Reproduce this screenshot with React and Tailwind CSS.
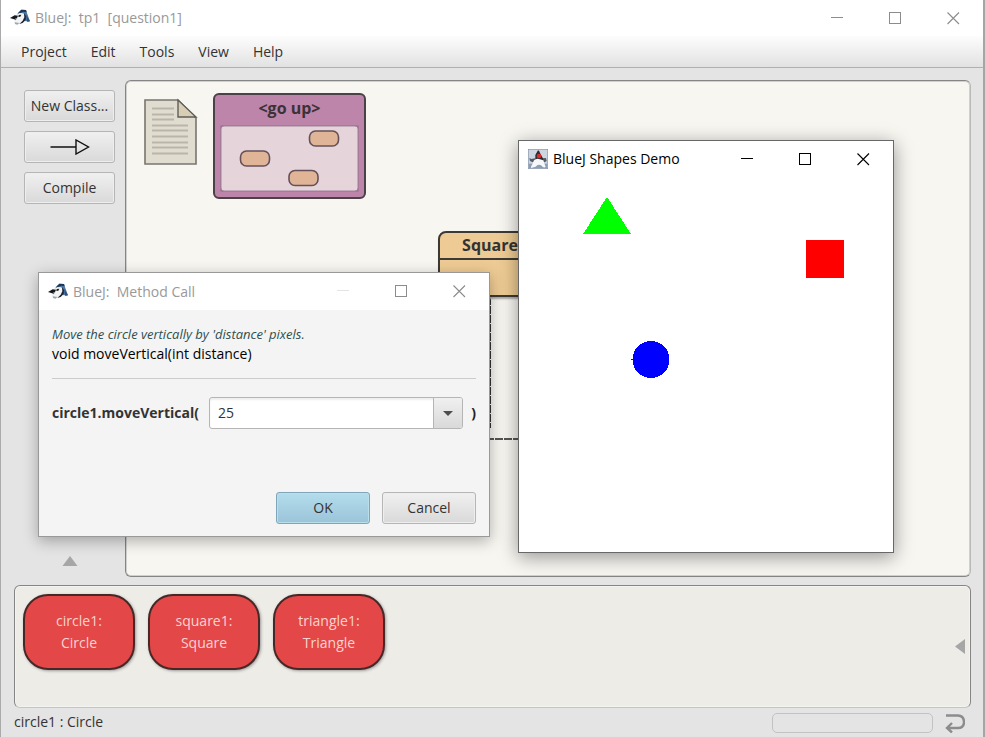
import React from "react";

const MENUS = ["Project", "Edit", "Tools", "View", "Help"];
const OBJECTS = [
  { name: "circle1", type: "Circle" },
  { name: "square1", type: "Square" },
  { name: "triangle1", type: "Triangle" },
];

function JayIcon() {
  return (
    <svg className="h-5 w-5 shrink-0" viewBox="0 0 60 60" aria-hidden="true">
      <path d="M24 14 L34 5 L48 6 L52 18 L60 40 L46 40 L40 20 Z" fill="#4d79a6" />
      <path d="M34 5 L48 6 L50 13 L40 11 L28 16 L20 20 Z" fill="#23364b" />
      <path d="M48 20 L60 40 L52 42 Z" fill="#2f5070" />
      <path d="M20 22 Q30 12 42 17 L46 28 L38 42 L24 50 L14 46 L12 38 Z" fill="#f2f4f5" />
      <path d="M0 30 L14 22 L24 23 L21 30 L12 34 Z" fill="#15191e" />
      <path d="M12 34 L22 31 L16 37 Z" fill="#555c63" />
      <path d="M26 21 L34 20 L31 26 L25 27 Z" fill="#15191e" />
      <path d="M42 15 L48 24 L47 36 L38 45 L28 48 L38 38 L43 28 Z" fill="#1b2633" />
      <path d="M14 43 L28 45 L22 50 L15 48 Z" fill="#9aa6ae" />
    </svg>
  );
}

function DukeIcon() {
  return (
    <svg className="h-5 w-5 shrink-0" viewBox="0 0 60 60" aria-hidden="true">
      <rect x="1" y="1" width="58" height="58" fill="#ccd5e0" stroke="#8494aa" strokeWidth="2" />
      <rect x="2" y="44" width="56" height="14" fill="#8e9db4" />
      <path d="M4 27 L10 30 L22 28 L23 38 L14 40 L6 36 Z" fill="#545b65" />
      <path d="M42 28 L54 27 L56 36 L50 40 L42 38 Z" fill="#545b65" />
      <path d="M30 4 Q34 5 36 12 L46 30 L44 36 L22 36 L22 18 Z" fill="#2b2c31" />
      <path d="M18 34 Q26 26 36 31 L46 34 L53 54 Q46 58 41 50 Q30 44 23 53 L9 57 Q8 52 12 47 Z" fill="#f5f7f8" />
      <circle cx="33" cy="21" r="7" fill="#d92c2c" />
    </svg>
  );
}

function WindowControls({ stroke, minStroke }) {
  return (
    <div className="flex gap-[45px] pr-[23px]">
      <button type="button" aria-label="Minimize" className="h-[13px] w-[13px]">
        <svg viewBox="0 0 13 13" className="block h-[13px] w-[13px]" shapeRendering="crispEdges">
          <path d="M0 5.5H12" stroke={minStroke || stroke} />
        </svg>
      </button>
      <button type="button" aria-label="Maximize" className="h-[13px] w-[13px]">
        <svg viewBox="0 0 13 13" className="block h-[13px] w-[13px]" shapeRendering="crispEdges">
          <rect x="0.5" y="0.5" width="11" height="11" fill="none" stroke={stroke} />
        </svg>
      </button>
      <button type="button" aria-label="Close" className="h-[13px] w-[13px]">
        <svg viewBox="0 0 13 13" className="block h-[13px] w-[13px]">
          <path d="M0.5 0.5L12 12M12 0.5L0.5 12" fill="none" stroke={stroke} strokeWidth="1.1" />
        </svg>
      </button>
    </div>
  );
}

function FxButton({ children, primary, className, ...rest }) {
  const tone = primary
    ? "border-[#7fa5b8] bg-linear-to-b from-[#b3dcec] to-[#9bc4d9] shadow-[inset_0_0_0_1px_#b9dfea]"
    : "border-[#b5b5b5] bg-linear-to-b from-[#f0f0f0] to-[#d9d9d9] shadow-[inset_0_0_0_1px_#eeeeee]";
  return (
    <button
      type="button"
      className={`flex h-8 items-center justify-center rounded-[3px] border text-[#333] ${tone} ${className || ""}`}
      {...rest}
    >
      {children}
    </button>
  );
}

function NoteIcon() {
  const lines = [9, 15, 20, 26, 31, 37, 43, 48, 54];
  return (
    <svg className="absolute left-[17px] top-[17px] h-[68px] w-[56px]" viewBox="0 0 56 68">
      <path d="M2 2H35L53 20V66H2Z" fill="#e0dccf" stroke="#77756f" strokeWidth="1.6" />
      <path d="M35 2V19H53Z" fill="#d8ceb5" stroke="#5f5d57" strokeWidth="1.4" />
      {lines.map((y, i) => (
        <path key={y} d={`M9 ${y + 1.5}H${i < 3 ? 31 : 45}`} stroke="#b9b5a9" strokeWidth="1.8" />
      ))}
    </svg>
  );
}

function PackageTarget() {
  return (
    <div className="absolute left-[87px] top-3 flex h-[106px] w-[153px] flex-col rounded-md border-2 border-[#4c4148] bg-[#bd85a9] px-[5px] pb-[5px]">
      <div className="h-[30px] text-center text-base leading-[26px] font-bold text-[#3a3238]">&lt;go up&gt;</div>
      <svg className="block w-full flex-1" viewBox="0 0 139 67" preserveAspectRatio="none">
        <rect x="0.5" y="0.5" width="138" height="66" fill="#9c6488" />
        <rect x="1" y="1" width="137" height="65" rx="3" fill="#e6d4db" stroke="#a0839a" />
        <g fill="#e0b497" stroke="#65505a" strokeWidth="1.6">
          <rect x="89.5" y="6" width="29" height="15" rx="6" />
          <rect x="20.5" y="26" width="29" height="15" rx="6" />
          <rect x="69" y="45.5" width="29" height="15" rx="6" />
        </g>
      </svg>
    </div>
  );
}

function ClassDiagram() {
  return (
    <div className="relative flex-1 overflow-hidden rounded-md border border-[#858585] border-r-[#b9b9b9] bg-[#f7f6f1] shadow-[inset_0_0_0_1px_#d0d0cc]">
      <NoteIcon />
      <PackageTarget />
      <svg className="absolute left-[360px] top-[214px] h-[150px] w-[100px]" viewBox="0 0 100 150" aria-hidden="true">
        <path d="M4 2V133" stroke="#333" strokeWidth="2" strokeDasharray="8 1" />
        <path d="M0 144H100" stroke="#555" strokeWidth="2" strokeDasharray="8 1" />
      </svg>
      <div className="absolute left-[312px] top-[150px] h-[66px] w-[104px] rounded-t-lg border-2 border-[#3d3a35] bg-[#eecb94] shadow-[1px_2px_2px_#aaaaaa]">
        <div className="h-[27px] border-b-2 border-[#3d3a35] text-center text-base leading-6 font-bold text-[#333]">Square</div>
      </div>
    </div>
  );
}

function ObjectBench() {
  return (
    <section className="mx-[13px] mt-2 mr-3 flex h-[123px] gap-[13px] rounded-md border border-[#858585] border-b-[#c4c4c4] bg-[#edece7] px-2 py-2 shadow-[inset_0_0_0_1px_#f3f3f1]">
      {OBJECTS.map((o) => (
        <button
          key={o.name}
          type="button"
          className="flex h-[76px] w-[112px] flex-col items-center justify-center rounded-[25px] border-2 border-[#482826] bg-[#e34747] text-sm leading-[22px] text-[#fbd3d0] shadow-[1px_1px_3px_#999999]"
        >
          <span>{o.name}:</span>
          <span>{o.type}</span>
        </button>
      ))}
      <button type="button" aria-label="Show code pad" className="my-auto ml-auto mr-[-3px]">
        <svg className="block h-4 w-[10px]" viewBox="0 0 10 16">
          <path d="M10 0V15L0 7.500Z" fill="#a6a6a6" />
        </svg>
      </button>
    </section>
  );
}

function MethodCallDialog() {
  return (
    <section className="absolute left-[37px] top-[272px] flex h-[265px] w-[452px] flex-col border border-[#999] bg-[#f4f4f4] shadow-[0_4px_14px_rgba(0,0,0,0.3)]">
      <header className="flex h-[37px] items-center justify-between bg-white">
        <h2 className="flex items-center gap-[5px] whitespace-pre pl-[9px] text-[#999]">
          <JayIcon />
          {"BlueJ:  Method Call"}
        </h2>
        <WindowControls stroke="#8c8c8c" minStroke="#e4e4e4" />
      </header>
      <form className="flex flex-1 flex-col px-[13px] pb-3 pt-[14px]" onSubmit={(e) => e.preventDefault()}>
        <p className="text-[13px] italic leading-5 text-[#2f4f4f]">Move the circle vertically by 'distance' pixels.</p>
        <p className="leading-5 text-black">void moveVertical(int distance)</p>
        <hr className="mt-[14px] border-[#cccccc]" />
        <div className="mt-[18px] flex items-center font-bold text-[#333]">
          <label htmlFor="distance" className="w-[157px]">circle1.moveVertical(</label>
          <div className="flex h-8 flex-1 overflow-hidden rounded-[3px] border border-[#b5b5b5] bg-white shadow-[inset_0_2px_2px_#eeeeee]">
            <input id="distance" defaultValue="25" className="w-0 flex-1 bg-transparent px-2 font-normal text-[#333] outline-none" />
            <button type="button" aria-label="Previous values" className="flex w-[29px] items-center justify-center border-l border-[#b5b5b5] bg-linear-to-b from-[#f0f0f0] to-[#d9d9d9]">
              <svg className="h-[5px] w-[10px]" viewBox="0 0 10 5"><path d="M0 0H10L5 5Z" fill="#4d4d4d" /></svg>
            </button>
          </div>
          <span className="pl-2 text-[#222]">)</span>
        </div>
        <div className="mt-auto flex justify-end gap-3">
          <FxButton primary className="w-[94px]">OK</FxButton>
          <FxButton className="w-[94px]">Cancel</FxButton>
        </div>
      </form>
    </section>
  );
}

function ShapesWindow() {
  return (
    <section className="absolute left-[517px] top-[140px] flex h-[413px] w-[376px] flex-col border border-[#686868] bg-white shadow-[0_4px_18px_rgba(0,0,0,0.4)]">
      <header className="flex h-9 items-center justify-between">
        <h2 className="flex items-center gap-[5px] pl-[9px] text-black">
          <DukeIcon />
          BlueJ Shapes Demo
        </h2>
        <WindowControls stroke="#000" />
      </header>
      <svg className="block w-full flex-1" viewBox="0 0 374 375" preserveAspectRatio="xMinYMin" shapeRendering="crispEdges">
        <path d="M88 20L112 57H64Z" fill="#00ff00" />
        <rect x="287" y="63" width="38" height="38" fill="#ff0000" />
        <circle cx="132" cy="182.500" r="18.500" fill="#0000ff" />
        <rect x="112" y="182" width="2" height="1" fill="#0000ff" />
      </svg>
    </section>
  );
}

export default function App() {
  return (
    <div className="relative flex min-h-screen flex-col overflow-hidden border-l border-[#aaaaaa] bg-[#e4e4e4] font-['Open_Sans','Noto_Sans',sans-serif] text-sm text-[#333]">
      <div className="flex flex-1 flex-col border-r-2 border-[#a5a5a5]">
        <header className="flex h-9 items-center justify-between bg-white">
          <h1 className="flex items-center gap-[5px] whitespace-pre pl-[9px] text-[#999]">
            <JayIcon />
            {"BlueJ:  tp1  [question1]"}
          </h1>
          <WindowControls stroke="#8c8c8c" />
        </header>
        <nav className="flex h-8 items-center gap-6 border-b border-[#b0b0b0] bg-linear-to-b from-[#fdfdfd] to-[#e2e2e2] px-5">
          {MENUS.map((m) => (
            <button key={m} type="button">{m}</button>
          ))}
        </nav>
        <main className="flex flex-1 pr-3 pt-3">
          <aside className="flex w-[124px] flex-col gap-[9px] pl-[23px] pr-[10px] pt-[10px]">
            <FxButton>New Class...</FxButton>
            <FxButton aria-label="Add inheritance arrow">
              <svg className="h-4 w-10" viewBox="0 0 40 16" fill="none" stroke="#111" strokeWidth="1.4">
                <path d="M0.500 8H26M26 1V15L38.500 8Z" />
              </svg>
            </FxButton>
            <FxButton>Compile</FxButton>
            <button type="button" aria-label="Show test controls" className="mb-[11px] mt-auto self-center">
              <svg className="block h-[10px] w-4" viewBox="0 0 16 10"><path d="M8 0L15.500 10H0.500Z" fill="#a6a6a6" /></svg>
            </button>
          </aside>
          <ClassDiagram />
        </main>
        <ObjectBench />
        <footer className="flex h-[29px] items-center pl-[13px] pr-4">
          <p className="flex-1 pb-px">circle1 : Circle</p>
          <div className="mr-3 h-5 w-[161px] rounded-[5px] border border-[#c2c2c2]" />
          <svg className="mr-[2px] h-5 w-5" viewBox="0 0 20 20" fill="none" stroke="#8c8c8c" strokeWidth="2.400">
            <path d="M1 2.500H13Q19 3 19 9Q19 15 13 15H3M7 10L2 15L7 19.500" />
          </svg>
        </footer>
      </div>
      <MethodCallDialog />
      <ShapesWindow />
    </div>
  );
}
